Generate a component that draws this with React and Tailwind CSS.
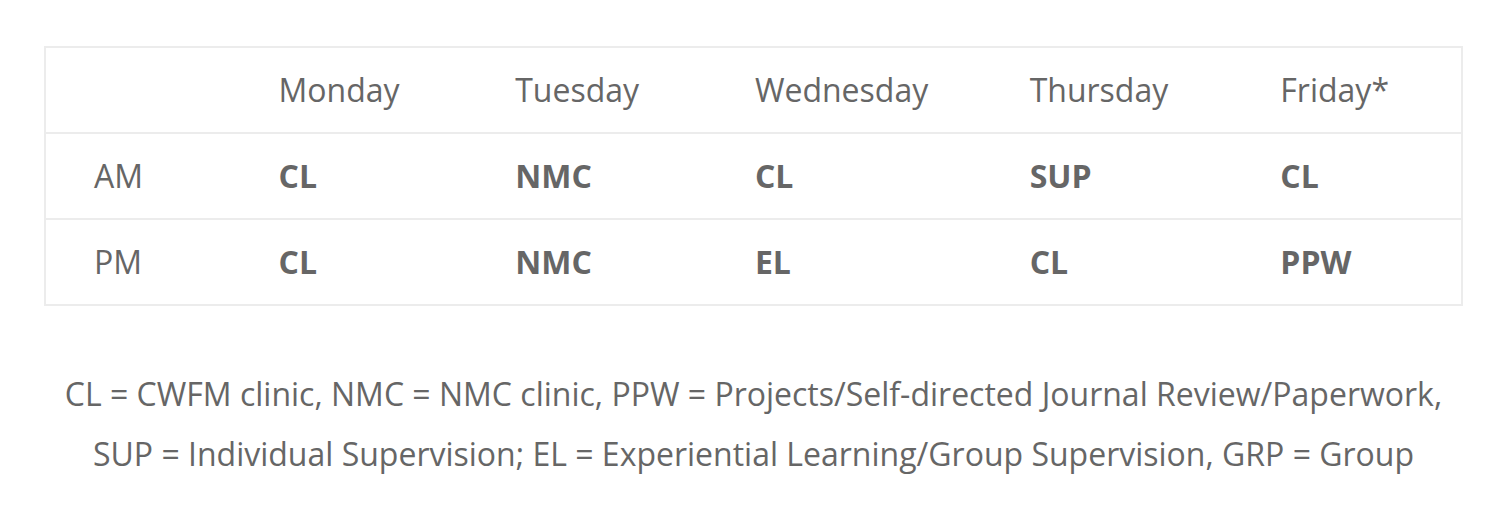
const days = ["Monday", "Tuesday", "Wednesday", "Thursday", "Friday*"];

const rows = [
  { label: "AM", cells: ["CL", "NMC", "CL", "SUP", "CL"] },
  { label: "PM", cells: ["CL", "NMC", "EL", "CL", "PPW"] },
];

const widths = ["w-[186px]", "w-[237px]", "w-[240px]", "w-[275px]", "w-[251px]", "w-[230px]"];

const App = () => {
  return (
    <div
      className="bg-white min-h-screen pt-[46px] px-[44px] text-[#666666]"
      style={{ fontFamily: '"Open Sans", "Liberation Sans", sans-serif' }}
    >
      {/* Schedule table */}
      <table className="w-[1419px] border-collapse border-2 border-[#ececec] text-[32px]">
        <thead>
          <tr className="h-[86px]">
            <th className={`${widths[0]} pl-[48px] text-left font-normal`}></th>
            {days.map((d, i) => (
              <th key={d} className={`${widths[i + 1]} pl-[48px] text-left font-normal`}>
                {d}
              </th>
            ))}
          </tr>
        </thead>
        <tbody>
          {rows.map((r) => (
            <tr key={r.label} className="h-[86px] border-t-2 border-[#ececec]">
              <td className="pl-[48px]">{r.label}</td>
              {r.cells.map((c, i) => (
                <td key={i} className="pl-[48px] font-bold">
                  {c}
                </td>
              ))}
            </tr>
          ))}
        </tbody>
      </table>

      {/* Legend */}
      <p className="w-[1419px] mt-[58px] text-center text-[32px] leading-[60px]">
        CL = CWFM clinic, NMC = NMC clinic, PPW = Projects/Self-directed Journal Review/Paperwork,
        <br />
        SUP = Individual Supervision; EL = Experiential Learning/Group Supervision, GRP = Group
      </p>
    </div>
  );
};

export default App;
